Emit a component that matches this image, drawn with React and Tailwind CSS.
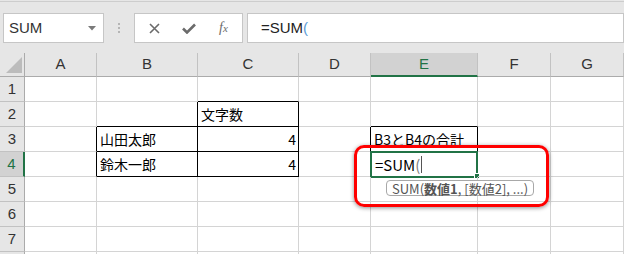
import React from 'react';

const COLS = ['A', 'B', 'C', 'D', 'E', 'F', 'G'];
const ROWS = [1, 2, 3, 4, 5, 6, 7, 8];

// black outlines: which cells draw a black right / bottom edge
const blackRight = new Set(['2B', '2C', '3A', '3B', '3C', '4A', '4B', '4C', '3D', '3E']);
const blackBottom = new Set(['1C', '2B', '2C', '3B', '3C', '4B', '4C', '2E', '3E']);

const values = {
  '2C': { text: '文字数' },
  '3B': { text: '山田太郎' },
  '4B': { text: '鈴木一郎' },
  '3C': { text: '4', right: true },
  '4C': { text: '4', right: true },
  '3E': { text: 'B3とB4の合計' },
};

function Cell({ row, col }) {
  const key = `${row}${col}`;
  const v = values[key];
  const active = key === '4E';
  return (
    <div
      className={
        'relative h-[25px] border-r border-b flex items-center text-[14px] leading-none text-black whitespace-nowrap ' +
        (blackRight.has(key) ? 'border-r-black ' : 'border-r-[#d4d4d4] ') +
        (blackBottom.has(key) ? 'border-b-black ' : 'border-b-[#d4d4d4] ') +
        (v && v.right ? 'justify-end pr-[2px]' : 'pl-[3px]')
      }
    >
      {v && <span>{v.text}</span>}
      {active && (
        <>
          <div className="absolute -left-px -top-px w-[108px] h-[27px] border-2 border-[#217346]" />
          <div className="absolute right-[-3px] bottom-[-3px] w-[6px] h-[6px] bg-[#217346] border border-white" />
          <div className="flex items-center pl-[1px] text-[15px]">
            <span>=SUM</span>
            <span className="text-[#7a7a7a]">(</span>
            <span className="ml-[1px] w-px h-[17px] bg-[#555]" />
          </div>
        </>
      )}
    </div>
  );
}

export default function App() {
  return (
    <div
      className="relative w-[624px] h-[254px] overflow-hidden bg-white"
      style={{ fontFamily: '"Noto Sans CJK JP", "Liberation Sans", sans-serif' }}
    >
      {/* Toolbar */}
      <div className="h-[53px] bg-[#e6e6e6]">
        <div className="h-px" />
        <div className="h-px bg-[#cdcdcd]" />
        <div className="flex items-start pt-[11px]">
          <div className="ml-[3px] w-[101px] h-[30px] border border-[#c6c6c6] bg-white flex items-center justify-between pl-[5px] pr-[7px]">
            <span className="text-[15px] text-[#333]" style={{ fontFamily: '"Liberation Sans", sans-serif' }}>SUM</span>
            <svg width="8" height="5" viewBox="0 0 8 5">
              <polygon points="0,0 8,0 4,4.5" fill="#7a7a7a" />
            </svg>
          </div>
          <div className="w-[30px] h-[30px] flex flex-col items-center justify-center gap-[2px]">
            <span className="w-[2px] h-[2px] bg-[#b5b5b5]" />
            <span className="w-[2px] h-[2px] bg-[#b5b5b5]" />
            <span className="w-[2px] h-[2px] bg-[#b5b5b5]" />
          </div>
          <div className="w-[109px] h-[30px] border border-[#c6c6c6] bg-white flex items-center">
            <div className="w-[36px] flex justify-center pl-[2px]">
              <svg width="11" height="11" viewBox="0 0 11 11">
                <path d="M1 1 L10 10 M10 1 L1 10" stroke="#6b6b6b" strokeWidth="1.6" />
              </svg>
            </div>
            <div className="w-[36px] flex justify-center">
              <svg width="14" height="11" viewBox="0 0 14 11">
                <path d="M1 5.5 L5 9.5 L13 1.5" stroke="#6b6b6b" strokeWidth="2.6" fill="none" />
              </svg>
            </div>
            <div className="flex-1 flex justify-center pr-[2px]">
              <span className="italic text-[14px] text-[#6b6b6b] leading-none" style={{ fontFamily: '"Liberation Serif", serif' }}>
                f<span className="text-[11px]">x</span>
              </span>
            </div>
          </div>
          <div className="ml-[4px] flex-1 h-[30px] border border-[#c6c6c6] bg-white flex items-center pl-[13px]">
            <span className="text-[15px] text-[#222]" style={{ fontFamily: '"Liberation Sans", sans-serif' }}>=SUM</span>
            <span className="text-[15px] text-[#5b9bd5]" style={{ fontFamily: '"Liberation Sans", sans-serif' }}>(</span>
          </div>
        </div>
      </div>

      {/* Sheet grid */}
      <div className="grid grid-cols-[25px_72px_101px_101px_72px_107px_73px_73px]">
        <div className="h-[24px] bg-[#e6e6e6] border-r border-b border-[#ababab]">
          <svg width="24" height="23" viewBox="0 0 24 23">
            <polygon points="22,4 22,20 6,20" fill="#bcbcbc" />
          </svg>
        </div>
        {COLS.map((c) => (
          <div
            key={c}
            className={
              'h-[24px] flex items-center justify-center text-[15px] border-r border-r-[#c2c2c2] ' +
              (c === 'E'
                ? 'bg-[#d2d2d2] text-[#217346] border-b-2 border-b-[#217346]'
                : 'bg-[#e6e6e6] text-[#333] border-b border-b-[#ababab]')
            }
            style={{ fontFamily: '"Liberation Sans", sans-serif' }}
          >
            {c}
          </div>
        ))}
        {ROWS.map((r) => (
          <React.Fragment key={r}>
            <div
              className={
                'h-[25px] flex items-center justify-center text-[15px] border-b border-b-[#c2c2c2] ' +
                (r === 4
                  ? 'bg-[#d2d2d2] text-[#217346] border-r-2 border-r-[#217346]'
                  : 'bg-[#e6e6e6] text-[#333] border-r border-r-[#ababab]')
              }
              style={{ fontFamily: '"Liberation Sans", sans-serif' }}
            >
              {r < 8 ? r : ''}
            </div>
            {COLS.map((c) => (
              <Cell key={c} row={r} col={c} />
            ))}
          </React.Fragment>
        ))}
      </div>

      {/* Function tooltip */}
      <div className="absolute left-[386px] top-[180px] h-[16px] px-[5px] flex items-center border border-[#a8a8a8] rounded-[4px] bg-white text-[13px] leading-none text-[#555] whitespace-nowrap">
        SUM(<span className="font-bold">数値1</span>, [数値2], ...)
      </div>

      {/* Red annotation box */}
      <div className="absolute left-[354px] top-[145px] w-[195px] h-[62px] border-[3px] border-[#ff0000] rounded-[10px] shadow-[0_1px_4px_rgba(0,0,0,0.45)]" />
    </div>
  );
}
